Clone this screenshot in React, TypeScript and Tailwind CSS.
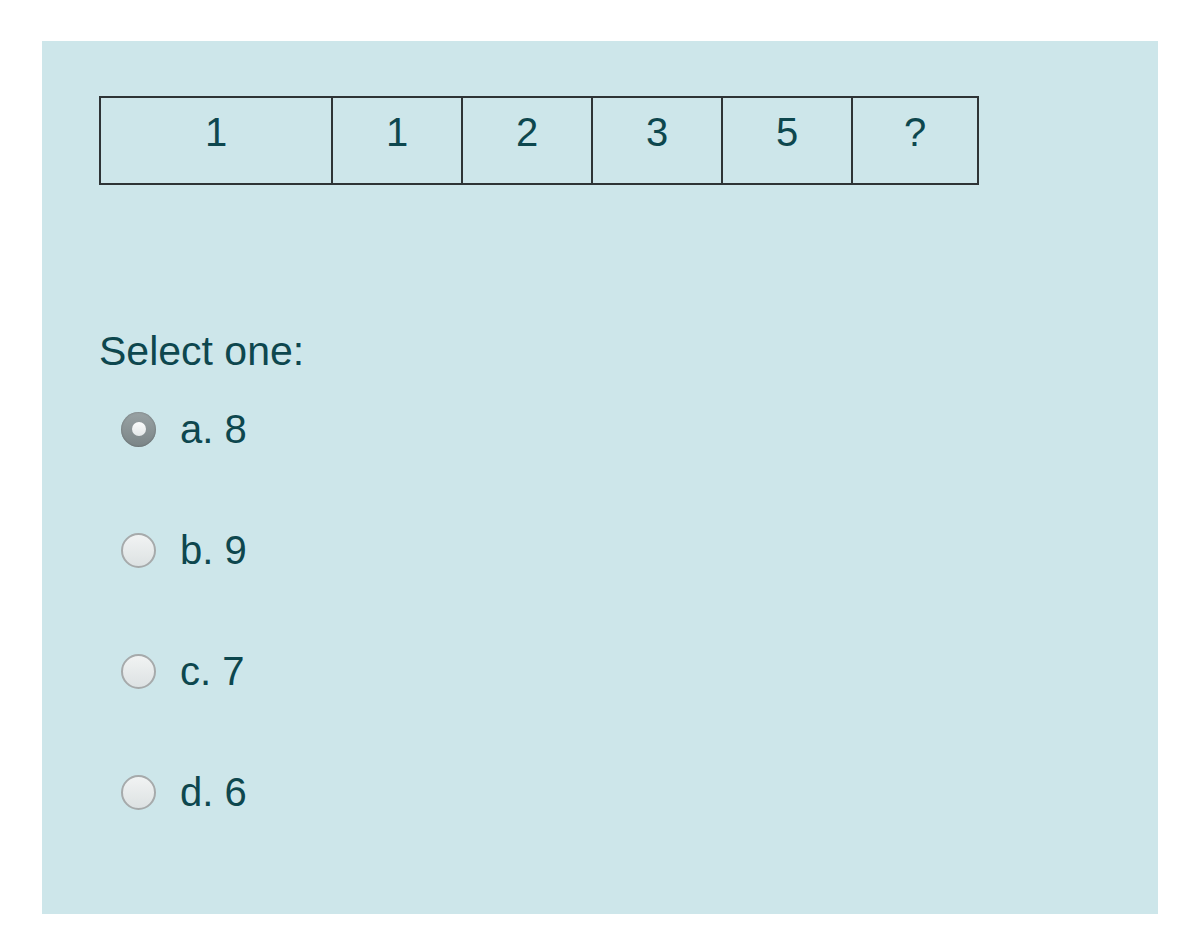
const cells = [
  { label: "1", w: "w-[230px]", first: true },
  { label: "1", w: "w-[130px]" },
  { label: "2", w: "w-[130px]" },
  { label: "3", w: "w-[130px]" },
  { label: "5", w: "w-[130px]" },
  { label: "?", w: "w-[126px]" },
];

const options = [
  { key: "a", value: "8", checked: true },
  { key: "b", value: "9" },
  { key: "c", value: "7" },
  { key: "d", value: "6" },
];

const Radio = ({ checked }: { checked?: boolean }) =>
  checked ? (
    <span className="flex h-[35px] w-[35px] shrink-0 items-center justify-center rounded-full bg-gradient-to-b from-[#99a2a4] to-[#7b8587] shadow-[inset_0_0_2px_rgba(0,0,0,0.35)]">
      <span className="h-[14px] w-[14px] rounded-full bg-gradient-to-b from-[#fbfcfc] to-[#e3e7e8]" />
    </span>
  ) : (
    <span className="h-[35px] w-[35px] shrink-0 rounded-full border-2 border-[#a6aaab] bg-gradient-to-b from-[#f1f3f3] to-[#dde2e3]" />
  );

export default function App() {
  return (
    <div className="min-h-screen bg-white pl-[42px] pt-[41px] font-['Liberation_Sans',Arial,sans-serif] text-[#0d474e]">
      <div className="h-[873px] w-[1116px] bg-[#cde6ea] pl-[57px] pt-[55px]">
        <div className="flex h-[89px] w-[880px] border-2 border-[#2e3436]">
          {cells.map((c, i) => (
            <div
              key={i}
              className={`${c.w} ${c.first ? "" : "border-l-2 border-[#2e3436]"} pt-[10px] text-center text-[40px] leading-[48px]`}
            >
              {c.label}
            </div>
          ))}
        </div>

        <div className="mt-[142px] h-12 text-[41px] leading-[48px]">Select one:</div>

        <div className="mt-[30px] flex flex-col gap-[73px] pl-[22px]">
          {options.map((o) => (
            <label key={o.key} className="flex h-12 items-center gap-[24px] text-[40px] leading-[48px]">
              <Radio checked={o.checked} />
              <span>
                {o.key}. {o.value}
              </span>
            </label>
          ))}
        </div>
      </div>
    </div>
  );
}
